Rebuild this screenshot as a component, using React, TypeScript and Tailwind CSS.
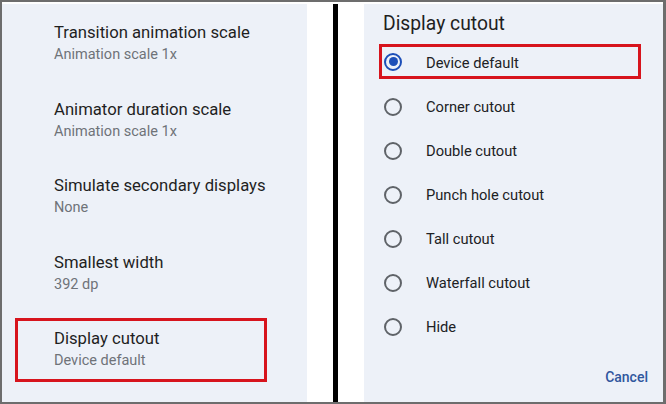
import React from 'react';

const settings = [
  { title: 'Transition animation scale', value: 'Animation scale 1x' },
  { title: 'Animator duration scale', value: 'Animation scale 1x' },
  { title: 'Simulate secondary displays', value: 'None' },
  { title: 'Smallest width', value: '392 dp' },
];

const options = ['Corner cutout', 'Double cutout', 'Punch hole cutout', 'Tall cutout', 'Waterfall cutout', 'Hide'];

const SettingText: React.FC<{ title: string; value: string }> = ({ title, value }) => (
  <div className="flex flex-col gap-[2px]">
    <span className="text-[16.7px] leading-[22px] text-[#1f1f1f]">{title}</span>
    <span className="text-[14.5px] leading-[18px] text-[#6f7378]">{value}</span>
  </div>
);

const Radio: React.FC<{ checked?: boolean }> = ({ checked }) =>
  checked ? (
    <div className="w-[18px] h-[18px] rounded-full border-2 border-[#1d4fb8] flex items-center justify-center shrink-0">
      <div className="w-[9px] h-[9px] rounded-full bg-[#1d4fb8]" />
    </div>
  ) : (
    <div className="w-[18px] h-[18px] rounded-full border-2 border-[#5f6368] shrink-0" />
  );

export default function App() {
  return (
    <div
      className="w-[666px] h-[404px] bg-[#6d6d6d] pt-[2px] pl-[2px] pr-[3px] pb-[2px] flex"
      style={{ fontFamily: 'Roboto, "Liberation Sans", sans-serif' }}
    >
      <div className="flex-1 flex bg-white pt-[2px]">
        {/* Developer options list */}
        <div className="w-[305px] bg-[#edf1f8] pt-[18px] flex flex-col">
          {settings.map(s => (
            <div key={s.title} className="h-[76.5px] pl-[52px]">
              <SettingText title={s.title} value={s.value} />
            </div>
          ))}
          <div className="-mt-[10px] ml-[13px] w-[252px] border-[3px] border-[#d7141d] pl-[36px] pt-[7px] pb-[9px]">
            <SettingText title="Display cutout" value="Device default" />
          </div>
        </div>

        <div className="w-[26px] bg-white" />
        <div className="w-[5px] bg-black" />
        <div className="w-[26px] bg-white" />

        {/* Display cutout dialog */}
        <div className="flex-1 bg-[#edf1f8] pt-[8px] flex flex-col">
          <h2 className="pl-[19px] text-[19.3px] leading-[24px] text-[#1f1f1f]">Display cutout</h2>
          <div className="mt-[8px] mb-[6px] ml-[15px] w-[262px] h-[35px] border-[3px] border-[#d7141d] pl-[2px] flex items-center gap-[24px]">
            <Radio checked />
            <span className="text-[14.7px] leading-[20px] pt-[2px] text-[#202124]">Device default</span>
          </div>
          {options.map(o => (
            <div key={o} className="h-[44px] pl-[20px] flex items-center gap-[24px]">
              <Radio />
              <span className="text-[14.7px] leading-[20px] text-[#202124]">{o}</span>
            </div>
          ))}
          <div className="mt-[18px] pr-[15px] flex justify-end">
            <button className="text-[14px] leading-[20px] font-medium text-[#30579e]">Cancel</button>
          </div>
        </div>
      </div>
    </div>
  );
}
